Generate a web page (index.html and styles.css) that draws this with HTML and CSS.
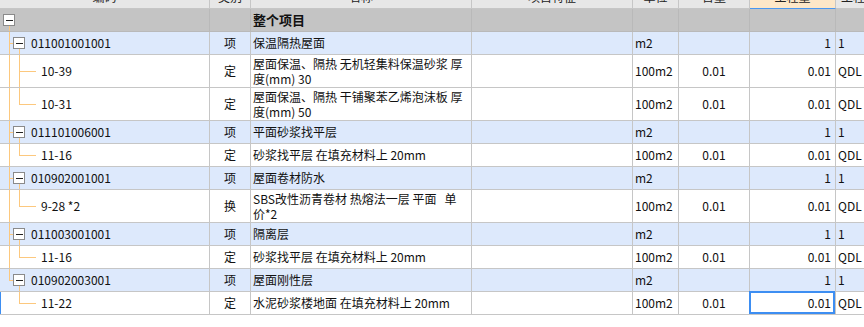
FILE: index.html
```html
<!DOCTYPE html>
<html lang="zh-CN">
<head>
<meta charset="utf-8">
<title>分部分项</title>
<link rel="stylesheet" href="styles.css">
</head>
<body>
<div class="sheet">
  <div class="row head">
    <div class="c ctr">编码</div>
    <div class="c ctr">类别</div>
    <div class="c ctr">名称</div>
    <div class="c ctr">项目特征</div>
    <div class="c ctr">单位</div>
    <div class="c ctr">含量</div>
    <div class="c ctr active">工程量</div>
    <div class="c last">工程量表达式</div>
  </div>

  <div class="row root">
    <div class="c tree t-root"><span class="tog"></span></div>
    <div class="c ctr"></div>
    <div class="c bold">整个项目</div>
    <div class="c"></div>
    <div class="c"></div>
    <div class="c"></div>
    <div class="c num"></div>
    <div class="c last"></div>
  </div>

  <div class="row item">
    <div class="c tree t-item"><span class="tog"></span>011001001001</div>
    <div class="c ctr">项</div>
    <div class="c">保温隔热屋面</div>
    <div class="c"></div>
    <div class="c">m2</div>
    <div class="c ctr"></div>
    <div class="c num">1</div>
    <div class="c last">1</div>
  </div>

  <div class="row tall">
    <div class="c tree t-leaf">10-39</div>
    <div class="c ctr">定</div>
    <div class="c top">屋面保温、隔热 无机轻集料保温砂浆 厚<br>度(mm) 30</div>
    <div class="c"></div>
    <div class="c">100m2</div>
    <div class="c ctr">0.01</div>
    <div class="c num">0.01</div>
    <div class="c last">QDL</div>
  </div>

  <div class="row tall">
    <div class="c tree t-leaf-last">10-31</div>
    <div class="c ctr">定</div>
    <div class="c top">屋面保温、隔热 干铺聚苯乙烯泡沫板 厚<br>度(mm) 50</div>
    <div class="c"></div>
    <div class="c">100m2</div>
    <div class="c ctr">0.01</div>
    <div class="c num">0.01</div>
    <div class="c last">QDL</div>
  </div>

  <div class="row item">
    <div class="c tree t-item"><span class="tog"></span>011101006001</div>
    <div class="c ctr">项</div>
    <div class="c">平面砂浆找平层</div>
    <div class="c"></div>
    <div class="c">m2</div>
    <div class="c ctr"></div>
    <div class="c num">1</div>
    <div class="c last">1</div>
  </div>

  <div class="row">
    <div class="c tree t-leaf-last">11-16</div>
    <div class="c ctr">定</div>
    <div class="c">砂浆找平层 在填充材料上 20mm</div>
    <div class="c"></div>
    <div class="c">100m2</div>
    <div class="c ctr">0.01</div>
    <div class="c num">0.01</div>
    <div class="c last">QDL</div>
  </div>

  <div class="row item">
    <div class="c tree t-item"><span class="tog"></span>010902001001</div>
    <div class="c ctr">项</div>
    <div class="c">屋面卷材防水</div>
    <div class="c"></div>
    <div class="c">m2</div>
    <div class="c ctr"></div>
    <div class="c num">1</div>
    <div class="c last">1</div>
  </div>

  <div class="row tall">
    <div class="c tree t-leaf-last">9-28 *2</div>
    <div class="c ctr">换</div>
    <div class="c top">SBS改性沥青卷材 热熔法一层 平面&nbsp;&nbsp; 单<br>价*2</div>
    <div class="c"></div>
    <div class="c">100m2</div>
    <div class="c ctr">0.01</div>
    <div class="c num">0.01</div>
    <div class="c last">QDL</div>
  </div>

  <div class="row item">
    <div class="c tree t-item"><span class="tog"></span>011003001001</div>
    <div class="c ctr">项</div>
    <div class="c">隔离层</div>
    <div class="c"></div>
    <div class="c">m2</div>
    <div class="c ctr"></div>
    <div class="c num">1</div>
    <div class="c last">1</div>
  </div>

  <div class="row">
    <div class="c tree t-leaf-last">11-16</div>
    <div class="c ctr">定</div>
    <div class="c">砂浆找平层 在填充材料上 20mm</div>
    <div class="c"></div>
    <div class="c">100m2</div>
    <div class="c ctr">0.01</div>
    <div class="c num">0.01</div>
    <div class="c last">QDL</div>
  </div>

  <div class="row item">
    <div class="c tree t-item-last"><span class="tog"></span>010902003001</div>
    <div class="c ctr">项</div>
    <div class="c">屋面刚性层</div>
    <div class="c"></div>
    <div class="c">m2</div>
    <div class="c ctr"></div>
    <div class="c num">1</div>
    <div class="c last">1</div>
  </div>

  <div class="row current">
    <div class="c tree t-leaf-end">11-22</div>
    <div class="c ctr">定</div>
    <div class="c">水泥砂浆楼地面 在填充材料上 20mm</div>
    <div class="c"></div>
    <div class="c">100m2</div>
    <div class="c ctr">0.01</div>
    <div class="c num sel">0.01</div>
    <div class="c last">QDL</div>
  </div>
</div>
</body>
</html>
```

FILE: styles.css
```css
html, body {
  margin: 0;
  padding: 0;
  background: #ffffff;
  overflow: hidden;
}

body {
  width: 864px;
  height: 327px;
  font-family: "Noto Sans CJK SC", "Noto Sans", sans-serif;
  font-size: 12px;
  color: #111;
}

.sheet {
  width: 864px;
  margin-top: -14px;
}

.row {
  display: grid;
  grid-template-columns: 210px 41px 221px 161px 46px 71px 86px 28px;
  height: 23px;
}

.row.tall {
  height: 33px;
}

.c {
  box-sizing: border-box;
  display: flex;
  align-items: center;
  padding: 0 2px;
  border-right: 1px solid #c6c6c6;
  border-bottom: 1px solid #c6c6c6;
  white-space: nowrap;
  line-height: 14px;
  position: relative;
}

.c.last {
  border-right: 0;
  overflow: hidden;
}

.row.head .c.last {
  padding-left: 5px;
}

.c.ctr {
  justify-content: center;
}

.c.num {
  justify-content: flex-end;
  padding-right: 4px;
}

.c.top {
  align-items: flex-start;
  padding-top: 1px;
  line-height: 15px;
}

.c.bold {
  font-weight: bold;
  font-size: 13px;
}

/* header */
.row.head {
  background: #e7e7e7;
}

.row.head .c {
  color: #222;
}

.row.head .c.active {
  background: #fde7c8;
  border-bottom-color: #4a97f0;
}

/* total row */
.row.root {
  background: #c4c4c4;
}

.row.root .c {
  border-right-color: #b9b9b9;
  border-bottom-color: #b9b9b9;
}

.row.root .c.last {
  border-right: 0;
}

/* bill item rows */
.row.item {
  background: #dde9fc;
}

/* tree column */
.tree {
  --ln: #fcc87e;
  padding-left: 41px;
}

.t-root {
  padding-left: 3px;
  background: linear-gradient(var(--ln), var(--ln)) 9px 100% / 1px 50% no-repeat;
}

.t-item,
.t-item-last {
  padding-left: 13px;
}

.t-item {
  background:
    linear-gradient(var(--ln), var(--ln)) 9px 0 / 1px 100% no-repeat,
    linear-gradient(var(--ln), var(--ln)) 9px 50% / 4px 1px no-repeat,
    linear-gradient(var(--ln), var(--ln)) 19px 100% / 1px 50% no-repeat;
}

.t-item-last {
  background:
    linear-gradient(var(--ln), var(--ln)) 9px 0 / 1px 50% no-repeat,
    linear-gradient(var(--ln), var(--ln)) 9px 50% / 4px 1px no-repeat,
    linear-gradient(var(--ln), var(--ln)) 19px 100% / 1px 50% no-repeat;
}

.t-leaf {
  background:
    linear-gradient(var(--ln), var(--ln)) 9px 0 / 1px 100% no-repeat,
    linear-gradient(var(--ln), var(--ln)) 19px 0 / 1px 100% no-repeat,
    linear-gradient(var(--ln), var(--ln)) 19px 50% / 17px 1px no-repeat;
}

.t-leaf-last {
  background:
    linear-gradient(var(--ln), var(--ln)) 9px 0 / 1px 100% no-repeat,
    linear-gradient(var(--ln), var(--ln)) 19px 0 / 1px 50% no-repeat,
    linear-gradient(var(--ln), var(--ln)) 19px 50% / 17px 1px no-repeat;
}

.t-leaf-end {
  background:
    linear-gradient(var(--ln), var(--ln)) 19px 0 / 1px 50% no-repeat,
    linear-gradient(var(--ln), var(--ln)) 19px 50% / 17px 1px no-repeat;
}

.tog {
  box-sizing: border-box;
  width: 12px;
  height: 12px;
  border: 1px solid #8a8a8a;
  background: #fff linear-gradient(#222, #222) 50% 50% / 7px 1px no-repeat;
  margin-right: 6px;
  flex: none;
}

/* current row / selected cell */
.row.current .tree {
  box-shadow: inset 1px 0 0 #3d8ef2;
}

.c.sel::after {
  content: "";
  position: absolute;
  top: -1px;
  left: -1px;
  right: 0;
  bottom: 0;
  border: 2px solid #3d8ef2;
  pointer-events: none;
}
```
